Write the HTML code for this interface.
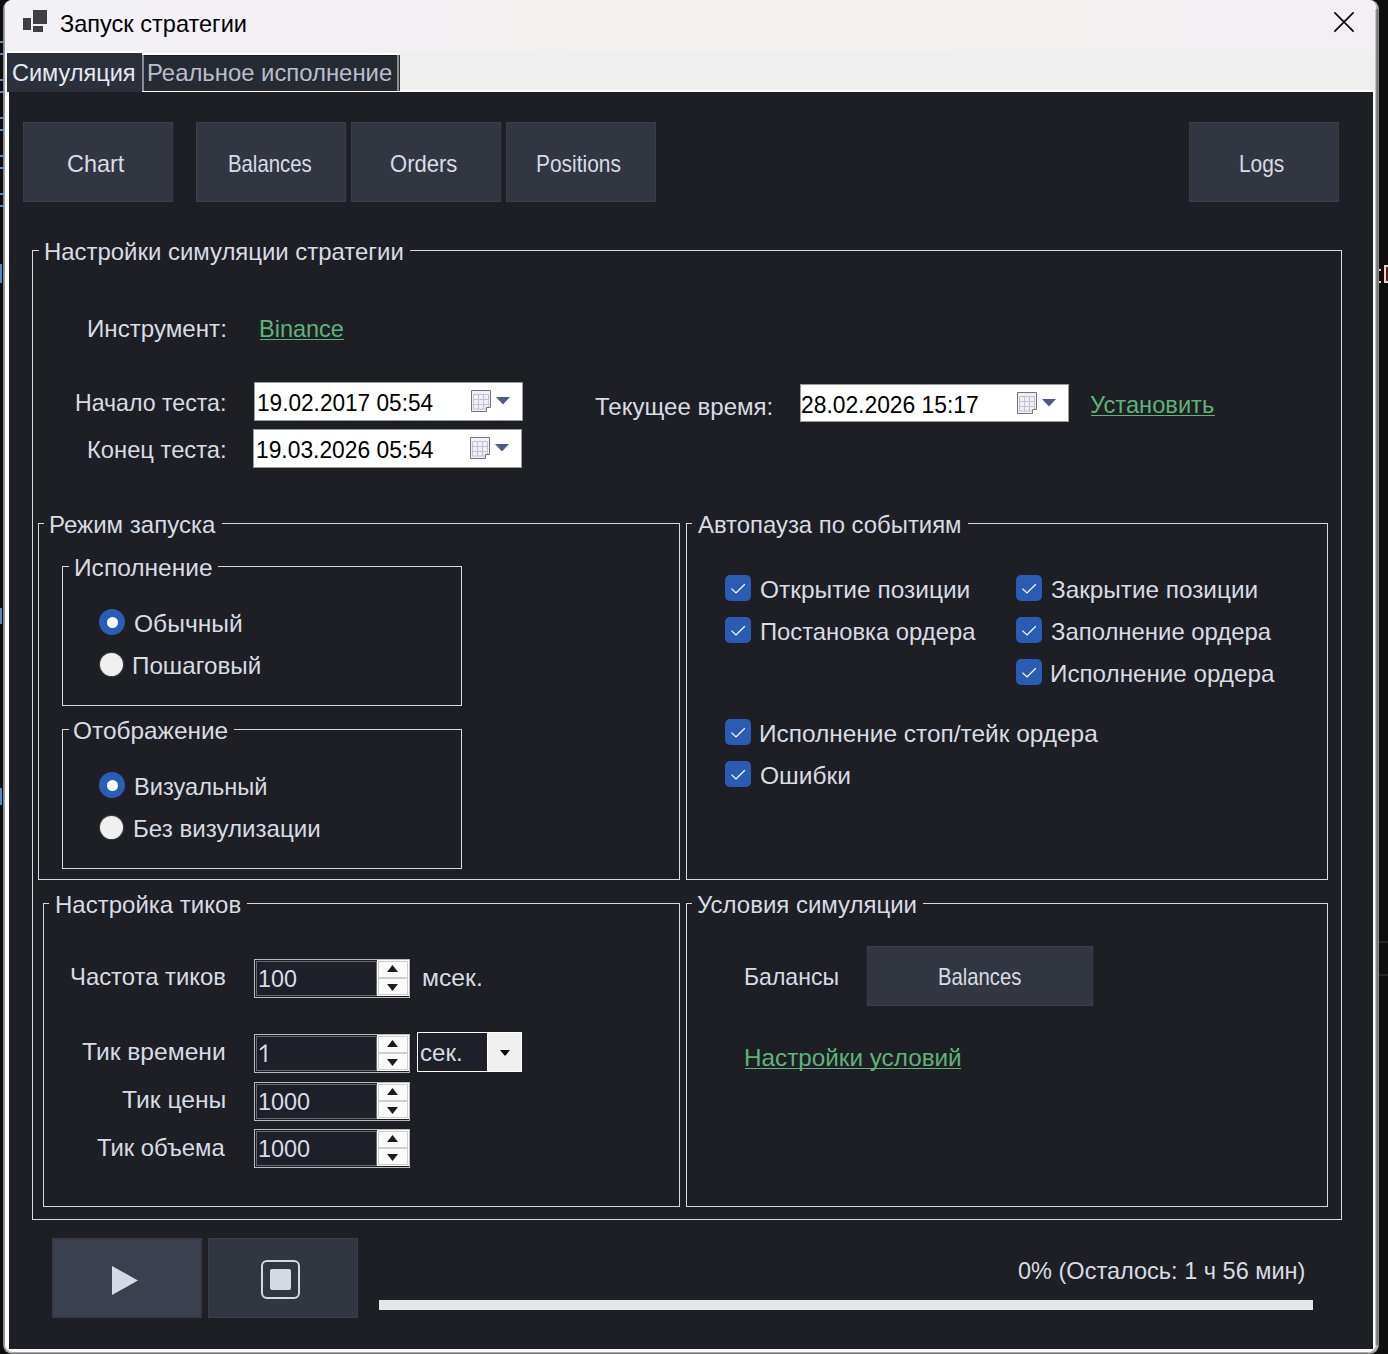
<!DOCTYPE html>
<html><head><meta charset="utf-8"><style>
html,body{margin:0;padding:0;width:1388px;height:1354px;overflow:hidden;background:#0e0e0e}
body>div{position:absolute}
.t{font-family:"Liberation Sans",sans-serif;font-size:24px;line-height:24px;white-space:nowrap;transform-origin:0 0}
</style></head><body>
<div style="left:3px;top:0px;width:1376px;height:1354px;background:#8c8c8c;border-radius:9px"></div>
<div style="left:4px;top:0px;width:1374px;height:1353px;background:#b4b4b4;border-radius:8px"></div>
<div style="left:5px;top:0px;width:1371px;height:1352px;background:#ffffff;border-radius:8px"></div>
<div style="left:5px;top:0px;width:1371px;height:51px;background:linear-gradient(90deg,#f2f1f6 0%,#f3f1f5 25%,#f4f1ef 45%,#f4f1ee 65%,#f3f0f2 85%,#f2f0f5 100%);border-radius:8px 8px 0 0"></div>
<div style="left:5px;top:51px;width:1371px;height:41px;background:#f0f0f0"></div>
<div style="left:5px;top:90px;width:1371px;height:2px;background:#ffffff"></div>
<div style="left:9px;top:92px;width:1364px;height:1257px;background:#1e1f24"></div>
<div style="left:1375px;top:9px;width:1px;height:1336px;background:#c4c4c4"></div>
<div style="left:1376px;top:9px;width:1px;height:1336px;background:#8c8c8c"></div>
<div style="left:1377px;top:9px;width:1px;height:1336px;background:#727272"></div>
<div style="left:1378px;top:9px;width:1px;height:1336px;background:#8a8a8a"></div>
<div style="left:12px;top:1352px;width:1356px;height:1px;background:#a8a8a8"></div>
<div style="left:12px;top:1353px;width:1356px;height:1px;background:#7a7a7a"></div>
<div style="left:3px;top:9px;width:1px;height:1336px;background:#8a8a8a"></div>
<div style="left:4px;top:9px;width:1px;height:1336px;background:#9c9c9c"></div>
<div style="left:1384px;top:265px;width:4px;height:18px;background:#d8d8d0"></div>
<div style="left:1386px;top:267px;width:2px;height:14px;background:#6a1010"></div>
<div style="left:1379px;top:269px;width:2px;height:2px;background:#d8d0b0"></div>
<div style="left:1379px;top:281px;width:2px;height:2px;background:#d8d0b0"></div>
<div style="left:1379px;top:941px;width:9px;height:2px;background:#262626"></div>
<div style="left:1379px;top:974px;width:9px;height:2px;background:#262626"></div>
<div style="left:0px;top:41px;width:3px;height:2px;background:#4f8fd6"></div>
<div style="left:0px;top:53px;width:3px;height:2px;background:#4f8fd6"></div>
<div style="left:0px;top:79px;width:3px;height:2px;background:#4f8fd6"></div>
<div style="left:0px;top:91px;width:3px;height:2px;background:#4f8fd6"></div>
<div style="left:0px;top:117px;width:3px;height:2px;background:#4f8fd6"></div>
<div style="left:0px;top:129px;width:3px;height:2px;background:#4f8fd6"></div>
<div style="left:0px;top:155px;width:3px;height:2px;background:#4f8fd6"></div>
<div style="left:0px;top:167px;width:3px;height:2px;background:#4f8fd6"></div>
<div style="left:0px;top:193px;width:3px;height:2px;background:#4f8fd6"></div>
<div style="left:0px;top:205px;width:3px;height:2px;background:#4f8fd6"></div>
<div style="left:0px;top:264px;width:2px;height:19px;background:#5a88c0"></div>
<div style="left:0px;top:608px;width:2px;height:16px;background:#5a88c0"></div>
<div style="left:0px;top:788px;width:2px;height:17px;background:#5a88c0"></div>
<div style="left:23px;top:18px;width:8px;height:12px;background:#404040"></div>
<div style="left:33px;top:10px;width:14px;height:14px;background:#404040"></div>
<div style="left:33px;top:26px;width:10px;height:6px;background:#404040"></div>
<svg style="position:absolute;left:1330px;top:8px" width="28" height="28" viewBox="0 0 28 28"><path d="M4.4 4.4 L23.6 23.6 M23.6 4.4 L4.4 23.6" stroke="#000" stroke-width="1.6" fill="none"/></svg>
<div style="left:5px;top:51px;width:137px;height:41px;background:#ffffff"></div>
<div style="left:7px;top:53px;width:135px;height:39px;background:#2c303b"></div>
<div style="left:142px;top:53px;width:258px;height:38px;background:#ffffff"></div>
<div style="left:142px;top:55px;width:2px;height:36px;background:#8c8c8c"></div>
<div style="left:397px;top:55px;width:2px;height:36px;background:#8c8c8c"></div>
<div style="left:399px;top:55px;width:1px;height:36px;background:#2a2d36"></div>
<div style="left:144px;top:55px;width:253px;height:36px;background:#262a33"></div>
<div style="left:144px;top:55px;width:253px;height:1px;background:#1c1e24"></div>
<div style="left:23px;top:122px;width:150px;height:80px;background:#323641;box-shadow:inset 0 0 0 1px #3a3e49"></div>
<div style="left:196px;top:122px;width:150px;height:80px;background:#323641;box-shadow:inset 0 0 0 1px #3a3e49"></div>
<div style="left:351px;top:122px;width:150px;height:80px;background:#323641;box-shadow:inset 0 0 0 1px #3a3e49"></div>
<div style="left:506px;top:122px;width:150px;height:80px;background:#323641;box-shadow:inset 0 0 0 1px #3a3e49"></div>
<div style="left:1189px;top:122px;width:150px;height:80px;background:#323641;box-shadow:inset 0 0 0 1px #3a3e49"></div>
<div style="left:32px;top:250px;width:1px;height:970px;background:#dadada"></div>
<div style="left:1341px;top:250px;width:1px;height:970px;background:#dadada"></div>
<div style="left:32px;top:1219px;width:1310px;height:1px;background:#dadada"></div>
<div style="left:32px;top:250px;width:7px;height:1px;background:#dadada"></div>
<div style="left:410px;top:250px;width:932px;height:1px;background:#dadada"></div>
<div style="left:38px;top:523px;width:1px;height:357px;background:#dadada"></div>
<div style="left:679px;top:523px;width:1px;height:357px;background:#dadada"></div>
<div style="left:38px;top:879px;width:642px;height:1px;background:#dadada"></div>
<div style="left:38px;top:523px;width:6px;height:1px;background:#dadada"></div>
<div style="left:222px;top:523px;width:458px;height:1px;background:#dadada"></div>
<div style="left:62px;top:566px;width:1px;height:140px;background:#dadada"></div>
<div style="left:461px;top:566px;width:1px;height:140px;background:#dadada"></div>
<div style="left:62px;top:705px;width:400px;height:1px;background:#dadada"></div>
<div style="left:62px;top:566px;width:7px;height:1px;background:#dadada"></div>
<div style="left:218px;top:566px;width:244px;height:1px;background:#dadada"></div>
<div style="left:62px;top:729px;width:1px;height:140px;background:#dadada"></div>
<div style="left:461px;top:729px;width:1px;height:140px;background:#dadada"></div>
<div style="left:62px;top:868px;width:400px;height:1px;background:#dadada"></div>
<div style="left:62px;top:729px;width:7px;height:1px;background:#dadada"></div>
<div style="left:234px;top:729px;width:228px;height:1px;background:#dadada"></div>
<div style="left:686px;top:523px;width:1px;height:357px;background:#dadada"></div>
<div style="left:1327px;top:523px;width:1px;height:357px;background:#dadada"></div>
<div style="left:686px;top:879px;width:642px;height:1px;background:#dadada"></div>
<div style="left:686px;top:523px;width:6px;height:1px;background:#dadada"></div>
<div style="left:968px;top:523px;width:360px;height:1px;background:#dadada"></div>
<div style="left:43px;top:903px;width:1px;height:304px;background:#dadada"></div>
<div style="left:679px;top:903px;width:1px;height:304px;background:#dadada"></div>
<div style="left:43px;top:1206px;width:637px;height:1px;background:#dadada"></div>
<div style="left:43px;top:903px;width:6px;height:1px;background:#dadada"></div>
<div style="left:247px;top:903px;width:433px;height:1px;background:#dadada"></div>
<div style="left:686px;top:903px;width:1px;height:304px;background:#dadada"></div>
<div style="left:1327px;top:903px;width:1px;height:304px;background:#dadada"></div>
<div style="left:686px;top:1206px;width:642px;height:1px;background:#dadada"></div>
<div style="left:686px;top:903px;width:6px;height:1px;background:#dadada"></div>
<div style="left:923px;top:903px;width:405px;height:1px;background:#dadada"></div>
<div style="left:260px;top:339px;width:84px;height:1px;background:#5cb47a"></div>
<div style="left:1091px;top:415px;width:124px;height:1px;background:#5cb47a"></div>
<div style="left:745px;top:1068px;width:216px;height:1px;background:#5cb47a"></div>
<div style="left:254px;top:382px;width:269px;height:39px;background:#ffffff;box-shadow:inset 0 0 0 1px #9a9a9a"></div>
<svg style="position:absolute;left:471px;top:390px" width="22" height="23" viewBox="0 0 22 23"><path d="M0.5 0.5 H19.5 V17.5 H15.5 V21.5 H0.5 Z" fill="#eef0f7" stroke="#7d7272" stroke-width="1"/><g stroke="#c2c4cc" stroke-width="1" fill="none"><path d="M2.5 4.5 H17.5 M2.5 9.5 H17.5 M2.5 14.5 H17.5 M2.5 19 H15"/><path d="M2.5 4.5 V19.5 M7.5 4.5 V19.5 M12.5 4.5 V19.5 M17.5 4.5 V17"/></g></svg>
<svg style="position:absolute;left:496px;top:397px" width="14" height="8" viewBox="0 0 14 8"><path d="M0 0 H14 L7 7.5 Z" fill="#4b5a80"/></svg>
<div style="left:253px;top:429px;width:269px;height:39px;background:#ffffff;box-shadow:inset 0 0 0 1px #9a9a9a"></div>
<svg style="position:absolute;left:470px;top:437px" width="22" height="23" viewBox="0 0 22 23"><path d="M0.5 0.5 H19.5 V17.5 H15.5 V21.5 H0.5 Z" fill="#eef0f7" stroke="#7d7272" stroke-width="1"/><g stroke="#c2c4cc" stroke-width="1" fill="none"><path d="M2.5 4.5 H17.5 M2.5 9.5 H17.5 M2.5 14.5 H17.5 M2.5 19 H15"/><path d="M2.5 4.5 V19.5 M7.5 4.5 V19.5 M12.5 4.5 V19.5 M17.5 4.5 V17"/></g></svg>
<svg style="position:absolute;left:495px;top:444px" width="14" height="8" viewBox="0 0 14 8"><path d="M0 0 H14 L7 7.5 Z" fill="#4b5a80"/></svg>
<div style="left:800px;top:384px;width:269px;height:38px;background:#ffffff;box-shadow:inset 0 0 0 1px #9a9a9a"></div>
<svg style="position:absolute;left:1017px;top:392px" width="22" height="23" viewBox="0 0 22 23"><path d="M0.5 0.5 H19.5 V17.5 H15.5 V21.5 H0.5 Z" fill="#eef0f7" stroke="#7d7272" stroke-width="1"/><g stroke="#c2c4cc" stroke-width="1" fill="none"><path d="M2.5 4.5 H17.5 M2.5 9.5 H17.5 M2.5 14.5 H17.5 M2.5 19 H15"/><path d="M2.5 4.5 V19.5 M7.5 4.5 V19.5 M12.5 4.5 V19.5 M17.5 4.5 V17"/></g></svg>
<svg style="position:absolute;left:1042px;top:399px" width="14" height="8" viewBox="0 0 14 8"><path d="M0 0 H14 L7 7.5 Z" fill="#4b5a80"/></svg>
<div style="left:99px;top:609px;width:26px;height:26px;border-radius:50%;background:#2a5eb6"></div>
<div style="left:106.5px;top:616.5px;width:11px;height:11px;border-radius:50%;background:#ffffff"></div>
<div style="left:99.5px;top:652.5px;width:23px;height:23px;border-radius:50%;background:#f0f0f0;box-shadow:0 0 0 1.2px #3a3a3a"></div>
<div style="left:99px;top:772px;width:26px;height:26px;border-radius:50%;background:#2a5eb6"></div>
<div style="left:106.5px;top:779.5px;width:11px;height:11px;border-radius:50%;background:#ffffff"></div>
<div style="left:99.5px;top:815.5px;width:23px;height:23px;border-radius:50%;background:#f0f0f0;box-shadow:0 0 0 1.2px #3a3a3a"></div>
<div style="left:725px;top:575px;width:26px;height:26px;border-radius:5px;background:#2a5cb4"></div>
<svg style="position:absolute;left:725px;top:575px" width="26" height="26" viewBox="0 0 26 26"><path d="M6.4 13.6 L11 17.9 L19.8 9.3" stroke="#fff" stroke-width="1.3" fill="none"/></svg>
<div style="left:725px;top:617px;width:26px;height:26px;border-radius:5px;background:#2a5cb4"></div>
<svg style="position:absolute;left:725px;top:617px" width="26" height="26" viewBox="0 0 26 26"><path d="M6.4 13.6 L11 17.9 L19.8 9.3" stroke="#fff" stroke-width="1.3" fill="none"/></svg>
<div style="left:1016px;top:575px;width:26px;height:26px;border-radius:5px;background:#2a5cb4"></div>
<svg style="position:absolute;left:1016px;top:575px" width="26" height="26" viewBox="0 0 26 26"><path d="M6.4 13.6 L11 17.9 L19.8 9.3" stroke="#fff" stroke-width="1.3" fill="none"/></svg>
<div style="left:1016px;top:617px;width:26px;height:26px;border-radius:5px;background:#2a5cb4"></div>
<svg style="position:absolute;left:1016px;top:617px" width="26" height="26" viewBox="0 0 26 26"><path d="M6.4 13.6 L11 17.9 L19.8 9.3" stroke="#fff" stroke-width="1.3" fill="none"/></svg>
<div style="left:1016px;top:659px;width:26px;height:26px;border-radius:5px;background:#2a5cb4"></div>
<svg style="position:absolute;left:1016px;top:659px" width="26" height="26" viewBox="0 0 26 26"><path d="M6.4 13.6 L11 17.9 L19.8 9.3" stroke="#fff" stroke-width="1.3" fill="none"/></svg>
<div style="left:725px;top:719px;width:26px;height:26px;border-radius:5px;background:#2a5cb4"></div>
<svg style="position:absolute;left:725px;top:719px" width="26" height="26" viewBox="0 0 26 26"><path d="M6.4 13.6 L11 17.9 L19.8 9.3" stroke="#fff" stroke-width="1.3" fill="none"/></svg>
<div style="left:725px;top:761px;width:26px;height:26px;border-radius:5px;background:#2a5cb4"></div>
<svg style="position:absolute;left:725px;top:761px" width="26" height="26" viewBox="0 0 26 26"><path d="M6.4 13.6 L11 17.9 L19.8 9.3" stroke="#fff" stroke-width="1.3" fill="none"/></svg>
<div style="left:254px;top:959px;width:156px;height:39px;background:#b9bbc1"></div>
<div style="left:255px;top:960px;width:154px;height:37px;background:#1e1f24"></div>
<div style="left:256px;top:961px;width:121px;height:35px;background:#6a6a6a"></div>
<div style="left:257px;top:962px;width:119px;height:33px;background:#1e2029"></div>
<div style="left:377px;top:960px;width:32px;height:36px;background:#fafafa"></div>
<div style="left:378px;top:961px;width:30px;height:17px;background:#fafafa;box-shadow:inset 0 0 0 1px #cfcfcf"></div>
<div style="left:378px;top:978px;width:30px;height:17px;background:#fafafa;box-shadow:inset 0 0 0 1px #cfcfcf"></div>
<svg style="position:absolute;left:387px;top:965px" width="11" height="7" viewBox="0 0 11 7"><path d="M0 7 L5.5 0 L11 7 Z" fill="#1c1c1c"/></svg>
<svg style="position:absolute;left:387px;top:984px" width="11" height="7" viewBox="0 0 11 7"><path d="M0 0 L11 0 L5.5 7 Z" fill="#1c1c1c"/></svg>
<div style="left:254px;top:1034px;width:156px;height:39px;background:#b9bbc1"></div>
<div style="left:255px;top:1035px;width:154px;height:37px;background:#1e1f24"></div>
<div style="left:256px;top:1036px;width:121px;height:35px;background:#6a6a6a"></div>
<div style="left:257px;top:1037px;width:119px;height:33px;background:#1e2029"></div>
<div style="left:377px;top:1035px;width:32px;height:36px;background:#fafafa"></div>
<div style="left:378px;top:1036px;width:30px;height:17px;background:#fafafa;box-shadow:inset 0 0 0 1px #cfcfcf"></div>
<div style="left:378px;top:1053px;width:30px;height:17px;background:#fafafa;box-shadow:inset 0 0 0 1px #cfcfcf"></div>
<svg style="position:absolute;left:387px;top:1040px" width="11" height="7" viewBox="0 0 11 7"><path d="M0 7 L5.5 0 L11 7 Z" fill="#1c1c1c"/></svg>
<svg style="position:absolute;left:387px;top:1059px" width="11" height="7" viewBox="0 0 11 7"><path d="M0 0 L11 0 L5.5 7 Z" fill="#1c1c1c"/></svg>
<div style="left:254px;top:1082px;width:156px;height:39px;background:#b9bbc1"></div>
<div style="left:255px;top:1083px;width:154px;height:37px;background:#1e1f24"></div>
<div style="left:256px;top:1084px;width:121px;height:35px;background:#6a6a6a"></div>
<div style="left:257px;top:1085px;width:119px;height:33px;background:#1e2029"></div>
<div style="left:377px;top:1083px;width:32px;height:36px;background:#fafafa"></div>
<div style="left:378px;top:1084px;width:30px;height:17px;background:#fafafa;box-shadow:inset 0 0 0 1px #cfcfcf"></div>
<div style="left:378px;top:1101px;width:30px;height:17px;background:#fafafa;box-shadow:inset 0 0 0 1px #cfcfcf"></div>
<svg style="position:absolute;left:387px;top:1088px" width="11" height="7" viewBox="0 0 11 7"><path d="M0 7 L5.5 0 L11 7 Z" fill="#1c1c1c"/></svg>
<svg style="position:absolute;left:387px;top:1107px" width="11" height="7" viewBox="0 0 11 7"><path d="M0 0 L11 0 L5.5 7 Z" fill="#1c1c1c"/></svg>
<div style="left:254px;top:1129px;width:156px;height:39px;background:#b9bbc1"></div>
<div style="left:255px;top:1130px;width:154px;height:37px;background:#1e1f24"></div>
<div style="left:256px;top:1131px;width:121px;height:35px;background:#6a6a6a"></div>
<div style="left:257px;top:1132px;width:119px;height:33px;background:#1e2029"></div>
<div style="left:377px;top:1130px;width:32px;height:36px;background:#fafafa"></div>
<div style="left:378px;top:1131px;width:30px;height:17px;background:#fafafa;box-shadow:inset 0 0 0 1px #cfcfcf"></div>
<div style="left:378px;top:1148px;width:30px;height:17px;background:#fafafa;box-shadow:inset 0 0 0 1px #cfcfcf"></div>
<svg style="position:absolute;left:387px;top:1135px" width="11" height="7" viewBox="0 0 11 7"><path d="M0 7 L5.5 0 L11 7 Z" fill="#1c1c1c"/></svg>
<svg style="position:absolute;left:387px;top:1154px" width="11" height="7" viewBox="0 0 11 7"><path d="M0 0 L11 0 L5.5 7 Z" fill="#1c1c1c"/></svg>
<svg style="position:absolute;left:258px;top:1043px" width="12" height="21" viewBox="0 0 12 21"><path d="M7.5 2 V19" stroke="#d8dce3" stroke-width="2.1" fill="none"/><path d="M2.6 6.2 L7.6 2.3" stroke="#d8dce3" stroke-width="2" fill="none" stroke-linecap="round"/></svg>
<div style="left:417px;top:1032px;width:105px;height:40px;background:#ffffff"></div>
<div style="left:418px;top:1033px;width:69px;height:38px;background:#1e2029"></div>
<div style="left:488px;top:1033px;width:33px;height:38px;background:#f0f0f0"></div>
<svg style="position:absolute;left:500px;top:1050px" width="10" height="6" viewBox="0 0 10 6"><path d="M0 0 H10 L5 6 Z" fill="#000"/></svg>
<div style="left:867px;top:946px;width:226px;height:60px;background:#323641;box-shadow:inset 0 0 0 1px #3a3e49"></div>
<div style="left:52px;top:1238px;width:150px;height:80px;background:#3a404d;box-shadow:inset 0 0 0 2px #363a45"></div>
<div style="left:208px;top:1238px;width:150px;height:80px;background:#323641;box-shadow:inset 0 0 0 1px #3a3e49"></div>
<svg style="position:absolute;left:110px;top:1264px" width="30" height="33" viewBox="0 0 30 33"><path d="M2 2 L28 16.5 L2 31 Z" fill="#d4d9e3"/></svg>
<div style="left:261px;top:1260px;width:35px;height:35px;border:2px solid #d4d9e3;border-radius:6px"></div>
<div style="left:270px;top:1269px;width:21px;height:21px;background:#d4d9e3;border-radius:2px"></div>
<div style="left:379px;top:1300px;width:934px;height:10px;background:#e6e6e6"></div>
<div class="t" style="left:59.59px;top:12px;color:#000;transform:scaleX(0.9814);">Запуск стратегии</div>
<div class="t" style="left:11.62px;top:61px;color:#e6eaf0;transform:scaleX(0.9796);">Симуляция</div>
<div class="t" style="left:146.60px;top:61px;color:#b9bec9;transform:scaleX(0.9941);">Реальное исполнение</div>
<div class="t" style="left:67.22px;top:152px;color:#d8dce3;transform:scaleX(0.9756);">Chart</div>
<div class="t" style="left:227.55px;top:152px;color:#d8dce3;transform:scaleX(0.8473);">Balances</div>
<div class="t" style="left:390.48px;top:152px;color:#d8dce3;transform:scaleX(0.9179);">Orders</div>
<div class="t" style="left:536.11px;top:152px;color:#d8dce3;transform:scaleX(0.8718);">Positions</div>
<div class="t" style="left:1239.30px;top:152px;color:#d8dce3;transform:scaleX(0.8705);">Logs</div>
<div class="t" style="left:43.80px;top:240px;color:#d8dce3;transform:scaleX(0.9966);">Настройки симуляции стратегии</div>
<div class="t" style="left:48.79px;top:513px;color:#d8dce3;transform:scaleX(1.0015);">Режим запуска</div>
<div class="t" style="left:73.77px;top:556px;color:#d8dce3;transform:scaleX(1.0215);">Исполнение</div>
<div class="t" style="left:73.18px;top:719px;color:#d8dce3;transform:scaleX(1.0169);">Отображение</div>
<div class="t" style="left:698.20px;top:513px;color:#d8dce3;transform:scaleX(0.9946);">Автопауза по событиям</div>
<div class="t" style="left:54.60px;top:893px;color:#d8dce3;transform:scaleX(1.0004);">Настройка тиков</div>
<div class="t" style="left:697.39px;top:893px;color:#d8dce3;transform:scaleX(0.9987);">Условия симуляции</div>
<div class="t" style="left:87.19px;top:317px;color:#d8dce3;transform:scaleX(1.0059);">Инструмент:</div>
<div class="t" style="left:259.00px;top:317px;color:#5cb47a;transform:scaleX(0.9794);">Binance</div>
<div class="t" style="left:75.03px;top:391px;color:#d8dce3;transform:scaleX(0.9636);">Начало теста:</div>
<div class="t" style="left:86.99px;top:438px;color:#d8dce3;transform:scaleX(0.9894);">Конец теста:</div>
<div class="t" style="left:256.85px;top:391px;color:#000;transform:scaleX(0.9424);">19.02.2017 05:54</div>
<div class="t" style="left:255.64px;top:438px;color:#000;transform:scaleX(0.9500);">19.03.2026 05:54</div>
<div class="t" style="left:595.00px;top:395px;color:#d8dce3;transform:scaleX(1.0022);">Текущее время:</div>
<div class="t" style="left:801.45px;top:393px;color:#000;transform:scaleX(0.9510);">28.02.2026 15:17</div>
<div class="t" style="left:1090.39px;top:393px;color:#5cb47a;transform:scaleX(0.9868);">Установить</div>
<div class="t" style="left:133.98px;top:612px;color:#d8dce3;transform:scaleX(1.0244);">Обычный</div>
<div class="t" style="left:131.98px;top:654px;color:#d8dce3;transform:scaleX(1.0082);">Пошаговый</div>
<div class="t" style="left:133.61px;top:775px;color:#d8dce3;transform:scaleX(0.9832);">Визуальный</div>
<div class="t" style="left:132.59px;top:817px;color:#d8dce3;transform:scaleX(1.0037);">Без визулизации</div>
<div class="t" style="left:759.78px;top:578px;color:#d8dce3;transform:scaleX(1.0196);">Открытие позиции</div>
<div class="t" style="left:759.80px;top:620px;color:#d8dce3;transform:scaleX(0.9913);">Постановка ордера</div>
<div class="t" style="left:1051.00px;top:578px;color:#d8dce3;transform:scaleX(1.0129);">Закрытие позиции</div>
<div class="t" style="left:1050.99px;top:620px;color:#d8dce3;transform:scaleX(0.9956);">Заполнение ордера</div>
<div class="t" style="left:1050.19px;top:662px;color:#d8dce3;transform:scaleX(1.0082);">Исполнение ордера</div>
<div class="t" style="left:758.98px;top:722px;color:#d8dce3;transform:scaleX(1.0176);">Исполнение стоп/тейк ордера</div>
<div class="t" style="left:759.98px;top:764px;color:#d8dce3;transform:scaleX(1.0234);">Ошибки</div>
<div class="t" style="left:69.99px;top:965px;color:#d8dce3;transform:scaleX(0.9940);">Частота тиков</div>
<div class="t" style="left:257.79px;top:967px;color:#d8dce3;transform:scaleX(0.9729);">100</div>
<div class="t" style="left:421.95px;top:966px;color:#d8dce3;transform:scaleX(1.0296);">мсек.</div>
<div class="t" style="left:82.20px;top:1040px;color:#d8dce3;transform:scaleX(1.0250);">Тик времени</div>
<div class="t" style="left:419.59px;top:1041px;color:#d8dce3;transform:scaleX(1.0040);">сек.</div>
<div class="t" style="left:122.00px;top:1088px;color:#d8dce3;transform:scaleX(1.0274);">Тик цены</div>
<div class="t" style="left:257.99px;top:1090px;color:#d8dce3;transform:scaleX(0.9769);">1000</div>
<div class="t" style="left:96.60px;top:1136px;color:#d8dce3;transform:scaleX(0.9929);">Тик объема</div>
<div class="t" style="left:257.99px;top:1137px;color:#d8dce3;transform:scaleX(0.9769);">1000</div>
<div class="t" style="left:743.82px;top:965px;color:#d8dce3;transform:scaleX(0.9599);">Балансы</div>
<div class="t" style="left:937.56px;top:965px;color:#d8dce3;transform:scaleX(0.8433);">Balances</div>
<div class="t" style="left:743.78px;top:1046px;color:#5cb47a;transform:scaleX(1.0110);">Настройки условий</div>
<div class="t" style="left:1018.19px;top:1259px;color:#d8dce3;transform:scaleX(0.9800);">0% (Осталось: 1 ч 56 мин)</div>
</body></html>
